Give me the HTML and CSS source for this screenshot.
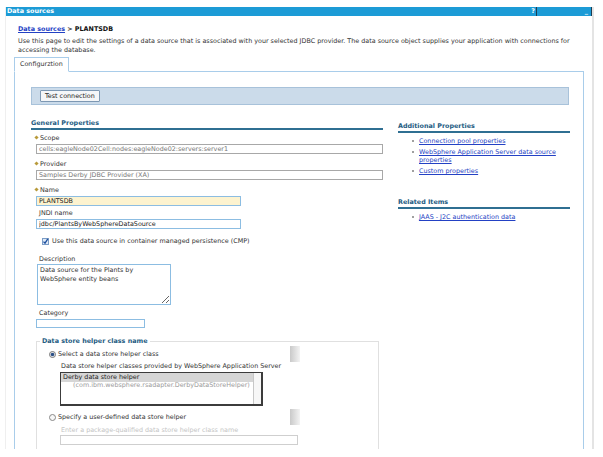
FILE: index.html
```html
<!DOCTYPE html>
<html lang="en">
<head>
  <meta charset="UTF-8">
  <title>Data sources - PLANTSDB</title>
  <link rel="stylesheet" href="styles.css">
</head>
<body>
  <div class="portlet">
    <div class="portlet-title">
      <span class="title-text">Data sources</span>
      <span class="title-tools">
        <span class="help">?</span>
        <span class="minimize">_</span>
      </span>
    </div>

    <div class="portlet-body">
      <div class="breadcrumb"><a href="#">Data sources</a> &gt; PLANTSDB</div>
      <p class="intro">
        Use this page to edit the settings of a data source that is associated with your selected JDBC provider. The data source object supplies your application with connections for accessing the database.
      </p>

      <div class="tabs">
        <span class="tab">Configurztion</span>
      </div>

      <div class="tab-panel">
        <div class="button-bar">
          <button class="btn">Test connection</button>
        </div>

        <div class="columns">
          <div class="col-main">
            <h3 class="section-title">General Properties</h3>

            <div class="field">
              <label class="label"><span class="req"></span>Scope</label>
              <input class="input input-wide input-readonly" value="cells:eagleNode02Cell:nodes:eagleNode02:servers:server1" readonly>
            </div>

            <div class="field">
              <label class="label"><span class="req"></span>Provider</label>
              <input class="input input-wide input-readonly" value="Samples Derby JDBC Provider (XA)" readonly>
            </div>

            <div class="field">
              <label class="label"><span class="req"></span>Name</label>
              <input class="input input-mid input-required" value="PLANTSDB">
            </div>

            <div class="field field-tight">
              <label class="label">JNDI name</label>
              <input class="input input-mid" value="jdbc/PlantsByWebSphereDataSource">
            </div>

            <div class="check-row">
              <svg class="checkbox" width="7" height="7" viewBox="0 0 7 7">
                <rect x="0.5" y="0.5" width="6" height="6" fill="#dfe9f5" stroke="#7b9cc6"/>
                <path d="M1.5 3.6 L3 5.2 L5.8 0.8" fill="none" stroke="#1d4f9e" stroke-width="1.3"/>
              </svg>
              <span>Use this data source in container managed persistence (CMP)</span>
            </div>

            <div class="field field-desc">
              <label class="label">Description</label>
              <textarea class="textarea">Data source for the Plants by WebSphere entity beans</textarea>
            </div>

            <div class="field field-category">
              <label class="label">Category</label>
              <input class="input input-short" value="">
            </div>

            <fieldset class="helper-set">
              <legend>Data store helper class name</legend>
              <div class="helper-body">
                <div class="radio-row">
                  <svg class="radio" width="7" height="7" viewBox="0 0 7 7">
                    <circle cx="3.5" cy="3.5" r="3" fill="#f2f2f2" stroke="#777"/>
                    <circle cx="3.5" cy="3.5" r="1.8" fill="#2b4f86"/>
                  </svg>
                  <span>Select a data store helper class</span>
                  <span class="grip"></span>
                </div>
                <div class="sub-label">Data store helper classes provided by WebSphere Application Server</div>
                <div class="listbox">
                  <div class="list-items">
                    <div class="list-item selected">
                      <div>Derby data store helper</div>
                      <div class="list-class">(com.ibm.websphere.rsadapter.DerbyDataStoreHelper)</div>
                    </div>
                  </div>
                  <div class="list-scroll"></div>
                </div>
                <div class="radio-row radio-row-second">
                  <svg class="radio" width="7" height="7" viewBox="0 0 7 7">
                    <circle cx="3.5" cy="3.5" r="3" fill="#f7f7f7" stroke="#888"/>
                  </svg>
                  <span>Specify a user-defined data store helper</span>
                  <span class="grip"></span>
                </div>
                <div class="sub-label placeholder">Enter a package-qualified data store helper class name</div>
                <input class="input input-helper" value="" disabled>
              </div>
            </fieldset>
          </div>

          <div class="col-side">
            <h3 class="section-title">Additional Properties</h3>
            <ul class="link-list">
              <li><a href="#">Connection pool properties</a></li>
              <li><a href="#">WebSphere Application Server data source properties</a></li>
              <li><a href="#">Custom properties</a></li>
            </ul>

            <h3 class="section-title related">Related Items</h3>
            <ul class="link-list">
              <li><a href="#">JAAS - J2C authentication data</a></li>
            </ul>
          </div>
        </div>
      </div>
    </div>
  </div>
</body>
</html>
```

FILE: styles.css
```css
* {
  margin: 0;
  padding: 0;
  box-sizing: border-box;
}

body {
  font-family: "DejaVu Sans", Verdana, sans-serif;
  font-size: 6.4px;
  line-height: 9px;
  color: #222;
  background: #fff;
}

a {
  color: #2341c4;
  text-decoration: underline;
}

.portlet {
  margin: 7px 0 0 5px;
  width: 589px;
  height: 442px;
  overflow: hidden;
  border-left: 1px solid #efefef;
  border-right: 2px solid #e4e4e4;
}

.portlet-title {
  display: flex;
  height: 9px;
  line-height: 9px;
  background: #1c9bd6;
  color: #fff;
  font-weight: bold;
  padding-left: 1px;
  border-right: 1px solid #1d3d52;
}

.title-tools {
  display: flex;
  margin-left: auto;
}

.help {
  padding-right: 1px;
}

.minimize {
  width: 55px;
  border-left: 1px solid #1d3d52;
  text-align: right;
  padding-right: 3px;
}

.portlet-body {
  padding: 9px 8px 0 8px;
}

.breadcrumb {
  padding-left: 4px;
  font-weight: bold;
  color: #111;
}

.intro {
  padding-left: 4px;
  margin-top: 3px;
  color: #333;
}

.tabs {
  display: flex;
  margin-top: 2px;
}

.tab {
  position: relative;
  height: 15px;
  line-height: 13px;
  padding: 0 5px;
  margin-bottom: -1px;
  background: #fff;
  border: 1px solid #a9cdea;
  border-bottom-color: #fff;
  color: #333;
}

.tab-panel {
  height: 420px;
  padding: 15px 14px 0 16px;
  border: 1px solid #a9cdea;
}

.button-bar {
  height: 18px;
  padding: 2px 0 0 8px;
  background: #cbdbea;
  border: 1px solid #a8c2da;
}

.btn {
  height: 12px;
  padding: 0 4px;
  font: inherit;
  color: #222;
  background: #f4f6f8;
  border: 1px solid #7d98b3;
  border-radius: 1px;
}

.columns {
  display: grid;
  grid-template-columns: 352px 172px;
  column-gap: 15px;
}

.section-title {
  margin-top: 14px;
  font-size: 6.4px;
  line-height: 9px;
  font-weight: bold;
  color: #245b82;
  border-bottom: 2px solid #2f6f92;
}

.field {
  margin-top: 4px;
}

.field + .field {
  margin-top: 6px;
}

.field-tight {
  margin-top: 3px !important;
}

.label {
  display: block;
  padding-left: 8px;
  margin-bottom: 1px;
  color: #333;
}

.req {
  display: inline-block;
  width: 3px;
  height: 3px;
  margin: 0 2px 1px -4px;
  background: #b89a3a;
  transform: rotate(45deg);
}

.input {
  display: block;
  height: 10px;
  margin-left: 5px;
  padding: 0 2px;
  font: inherit;
  color: #222;
  background: #fff;
  border: 1px solid #8cbde2;
  outline: none;
}

.input-wide {
  width: 347px;
}

.input-mid {
  width: 205px;
}

.input-short {
  width: 109px;
  height: 9px;
}

.input-readonly {
  color: #777;
  border-color: #a8a8a8;
}

.input-required {
  background: #fdf3cf;
}

.check-row {
  display: flex;
  align-items: center;
  gap: 3px;
  margin-top: 8px;
  padding-left: 11px;
  color: #333;
}

.field-desc {
  margin-top: 9px;
}

.field-desc .label {
  margin-bottom: 0;
}

.field-category {
  margin-top: 4px !important;
}

.textarea {
  display: block;
  width: 134px;
  height: 41px;
  margin-left: 6px;
  padding: 1px 2px;
  font: inherit;
  line-height: 9px;
  color: #333;
  border: 1px solid #8cbde2;
  outline: none;
}

.helper-set {
  width: 343px;
  margin: 9px 0 0 5px;
  padding: 0 0 20px 3px;
  border: 1px solid #e0e0e0;
}

.helper-set legend {
  padding: 0 2px;
  font-weight: bold;
  color: #245b82;
}

.helper-body {
  padding-left: 9px;
}

.radio-row {
  display: flex;
  align-items: center;
  gap: 2px;
  width: 251px;
  height: 16px;
  color: #333;
}

.radio-row-second {
  margin-top: 3px;
}

.grip {
  width: 10px;
  height: 16px;
  margin-left: auto;
  background: linear-gradient(to right, #c9c9c9, #f3f3f3);
}

.sub-label {
  padding-left: 12px;
  color: #333;
}

.placeholder {
  margin-top: 1px;
  color: #c4c4c4;
}

.listbox {
  display: flex;
  width: 203px;
  height: 34px;
  margin: 1px 0 0 11px;
  border: 1px solid #3c3c3c;
  border-right-width: 2px;
  border-bottom-width: 2px;
}

.list-items {
  flex: 1;
}

.list-item {
  padding-left: 2px;
  line-height: 8px;
}

.list-item.selected {
  background: linear-gradient(#d6d6d6 0, #d6d6d6 9px, #fff 9px);
}

.list-class {
  padding-left: 10px;
  color: #9a9a9a;
}

.list-scroll {
  width: 8px;
  border-left: 1px solid #c8c8c8;
  background: #f7f7f7;
}

.input-helper {
  width: 238px;
  margin: 0 0 0 11px;
  border-color: #cfcfcf;
  background: #fff;
}

.col-side {
  margin-top: 3px;
}

.link-list {
  list-style: none;
  margin-top: 4px;
}

.link-list li {
  position: relative;
  padding-left: 21px;
  margin-bottom: 3px;
  line-height: 8px;
}

.link-list li::before {
  content: "";
  position: absolute;
  left: 14px;
  top: 3px;
  width: 2px;
  height: 2px;
  background: #a0a0a0;
}

.section-title.related {
  margin-top: 23px;
}
```
